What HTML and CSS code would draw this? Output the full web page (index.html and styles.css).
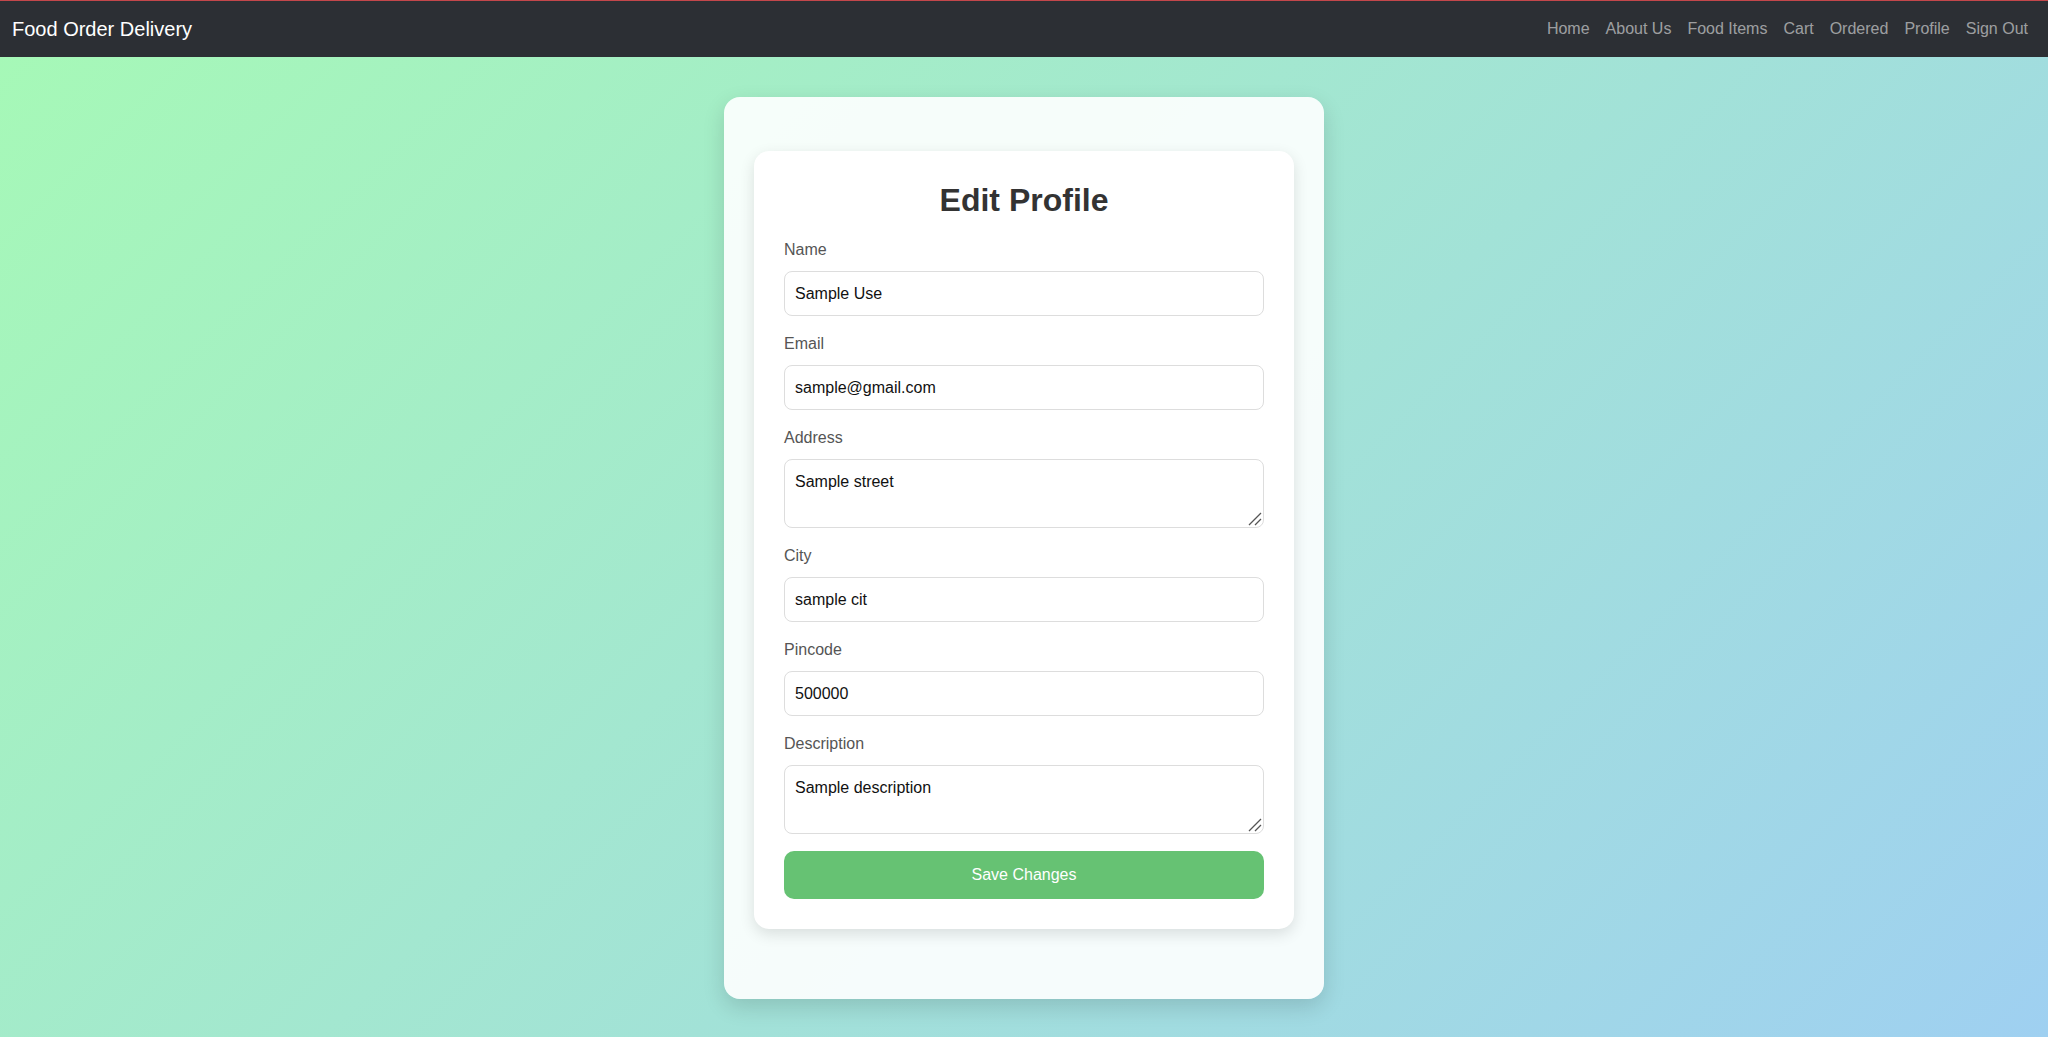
FILE: index.html
```html
<!DOCTYPE html>
<html lang="en">
<head>
<meta charset="utf-8">
<title>Edit Profile - Food Order Delivery</title>
<link rel="stylesheet" href="styles.css">
</head>
<body>
<nav class="navbar">
  <a class="brand" href="#">Food Order Delivery</a>
  <ul class="nav-links">
    <li><a href="#">Home</a></li>
    <li><a href="#">About Us</a></li>
    <li><a href="#">Food Items</a></li>
    <li><a href="#">Cart</a></li>
    <li><a href="#">Ordered</a></li>
    <li><a href="#">Profile</a></li>
    <li><a href="#">Sign Out</a></li>
  </ul>
</nav>
<main class="page">
  <div class="outer-card">
    <div class="form-card">
      <h2 class="form-title">Edit Profile</h2>
      <form class="profile-form">
        <div class="field">
          <label for="name">Name</label>
          <input id="name" type="text" value="Sample Use">
        </div>
        <div class="field">
          <label for="email">Email</label>
          <input id="email" type="email" value="sample@gmail.com">
        </div>
        <div class="field">
          <label for="address">Address</label>
          <div class="textarea-wrap">
            <textarea id="address">Sample street</textarea>
            <svg class="resizer" width="14" height="14" viewBox="0 0 14 14" aria-hidden="true"><path d="M1 13 L13 1 M7 13 L13 7" stroke="#555" stroke-width="1.3" fill="none"/></svg>
          </div>
        </div>
        <div class="field">
          <label for="city">City</label>
          <input id="city" type="text" value="sample cit">
        </div>
        <div class="field">
          <label for="pincode">Pincode</label>
          <input id="pincode" type="text" value="500000">
        </div>
        <div class="field field-last">
          <label for="description">Description</label>
          <div class="textarea-wrap">
            <textarea id="description">Sample description</textarea>
            <svg class="resizer" width="14" height="14" viewBox="0 0 14 14" aria-hidden="true"><path d="M1 13 L13 1 M7 13 L13 7" stroke="#555" stroke-width="1.3" fill="none"/></svg>
          </div>
        </div>
        <button type="button" class="btn-save">Save Changes</button>
      </form>
    </div>
  </div>
</main>
</body>
</html>
```
FILE: styles.css
```css
* {
  box-sizing: border-box;
}

html, body {
  margin: 0;
  padding: 0;
}

body {
  min-height: 100vh;
  font-family: "Liberation Sans", Arial, Helvetica, sans-serif;
  background: linear-gradient(135deg, #a6f9b6 0%, #9fd0f1 100%);
  background-attachment: fixed;
}

.navbar {
  height: 57px;
  border-top: 1px solid #c4474b;
  background: #2c2f34;
  display: flex;
  align-items: center;
  justify-content: space-between;
  padding: 0 12px;
}

.brand {
  color: #ffffff;
  font-size: 20px;
  text-decoration: none;
  line-height: 1;
}

.nav-links {
  list-style: none;
  margin: 0;
  padding: 0;
  display: flex;
}

.nav-links a {
  display: block;
  padding: 0 8px;
  font-size: 16px;
  color: rgba(255, 255, 255, 0.55);
  text-decoration: none;
  line-height: 1;
}

.page {
  min-height: calc(100vh - 57px);
  padding-top: 2px;
  display: flex;
  align-items: center;
  justify-content: center;
}

.outer-card {
  width: 600px;
  padding: 54px 30px 70px;
  background: rgba(255, 255, 255, 0.9);
  border-radius: 16px;
  box-shadow: 0 8px 22px rgba(0, 0, 0, 0.14);
}

.form-card {
  background: #ffffff;
  border-radius: 15px;
  padding: 30px;
  box-shadow: 0 5px 15px rgba(0, 0, 0, 0.12);
}

.form-title {
  margin: 0 0 22px;
  text-align: center;
  font-size: 32px;
  line-height: 38px;
  font-weight: bold;
  color: #333333;
}

.field {
  margin-bottom: 19px;
}

.field-last {
  margin-bottom: 17px;
}

.field label {
  display: block;
  font-size: 16px;
  line-height: 18px;
  color: #555555;
  margin-bottom: 12px;
}

.field input,
.field textarea {
  display: block;
  width: 100%;
  font-family: "Liberation Sans", Arial, Helvetica, sans-serif;
  font-size: 16px;
  color: #111111;
  background: #ffffff;
  border: 1px solid #dddddd;
  border-radius: 8px;
  outline: none;
}

.field input {
  height: 45px;
  padding: 0 10px;
}

.textarea-wrap {
  position: relative;
}

.field textarea {
  height: 69px;
  padding: 12px 10px;
  line-height: 19px;
  resize: none;
}

.resizer {
  position: absolute;
  right: 2px;
  bottom: 2px;
  pointer-events: none;
}

.btn-save {
  display: block;
  width: 100%;
  height: 48px;
  border: none;
  border-radius: 10px;
  background: #66c273;
  color: #ffffff;
  font-family: "Liberation Sans", Arial, Helvetica, sans-serif;
  font-size: 16px;
  cursor: pointer;
}
```
